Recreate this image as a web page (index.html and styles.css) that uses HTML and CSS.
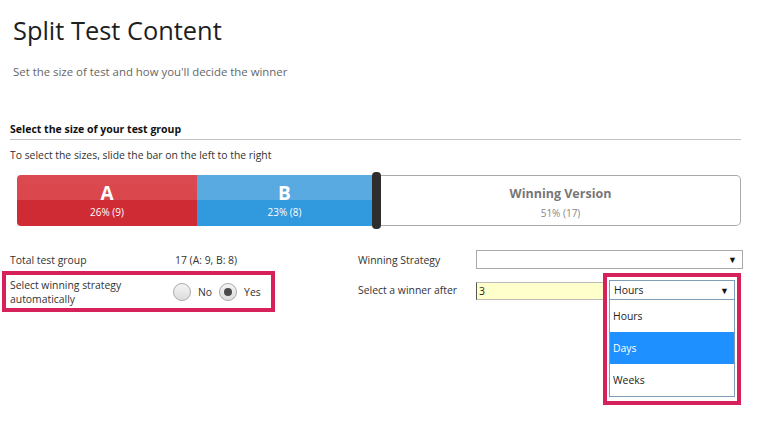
FILE: index.html
```html
<!DOCTYPE html>
<html lang="en">
<head>
    <meta charset="UTF-8">
    <meta name="viewport" content="width=device-width, initial-scale=1.0">
    <title>Split Test Content</title>
    <link rel="stylesheet" href="styles.css">
</head>
<body>
    <header class="intro">
        <h1>Split Test Content</h1>
        <p class="lead">Set the size of test and how you'll decide the winner</p>
    </header>

    <main class="group">
        <h2 class="section-title">Select the size of your test group</h2>
        <p class="hint">To select the sizes, slide the bar on the left to the right</p>

        <div class="splitter">
            <div class="seg seg-a" style="width: 180px;">
                <span class="seg-name">A</span>
                <span class="seg-share">26% (9)</span>
            </div>
            <div class="seg seg-b" style="width: 175px;">
                <span class="seg-name">B</span>
                <span class="seg-share">23% (8)</span>
            </div>
            <div class="handle"></div>
            <div class="seg seg-win">
                <span class="seg-name">Winning Version</span>
                <span class="seg-share">51% (17)</span>
            </div>
        </div>

        <div class="settings">
            <div class="col col-left">
                <div class="row">
                    <span class="label">Total test group</span>
                    <span class="value">17 (A: 9, B: 8)</span>
                </div>
                <div class="row highlight highlight-auto">
                    <span class="label">Select winning strategy<br>automatically</span>
                    <label class="radio"><span class="dot"></span>No</label>
                    <label class="radio"><span class="dot checked"></span>Yes</label>
                </div>
            </div>

            <div class="col col-right">
                <div class="row">
                    <span class="label label-wide">Winning Strategy</span>
                    <div class="select select-strategy"><span></span><span class="arrow">&#9660;</span></div>
                </div>
                <div class="row row-after">
                    <span class="label label-wide label-after">Select a winner after</span>
                    <div class="text-input">3</div>
                    <div class="highlight highlight-unit">
                        <div class="select select-unit"><span>Hours</span><span class="arrow">&#9660;</span></div>
                        <ul class="options">
                            <li>Hours</li>
                            <li class="active">Days</li>
                            <li>Weeks</li>
                        </ul>
                    </div>
                </div>
            </div>
        </div>
    </main>
</body>
</html>
```

FILE: styles.css
```css
body {
    font-family: "Open Sans", "Noto Sans", sans-serif;
    margin: 0;
    padding: 0;
    background-color: #fff;
    color: #333;
}

.intro {
    padding: 12px 13px 0;
}

.intro h1 {
    font-size: 25.4px;
    font-weight: 400;
    color: #1e1e1e;
    margin: 0;
    line-height: 36px;
}

.lead {
    font-size: 11.4px;
    color: #666;
    margin: 16px 0 0;
}

.group {
    padding: 0 16px 0 10px;
    margin-top: 43px;
}

.section-title {
    font-size: 10.5px;
    font-weight: 700;
    color: #111;
    margin: 0;
    padding-bottom: 3px;
    border-bottom: 1px solid #c3c3c3;
}

.hint {
    font-size: 10.4px;
    color: #333;
    margin: 8px 0 0;
}

.splitter {
    display: flex;
    align-items: center;
    height: 57px;
    margin: 10px 0 0 7px;
    width: 724px;
}

.seg {
    height: 51px;
    box-sizing: border-box;
    padding-top: 9px;
    display: flex;
    flex-direction: column;
    align-items: center;
    color: #fff;
}

.seg-name {
    font-size: 19px;
    font-weight: 700;
    line-height: 18px;
}

.seg-share {
    font-size: 10px;
    line-height: 14px;
    margin-top: 3px;
}

.seg-a {
    background: linear-gradient(#db4a50 0%, #d9464c 50%, #cf2b34 50%, #cf2b34 100%);
    border-radius: 4px 0 0 4px;
}

.seg-b {
    background: linear-gradient(#5aaae2 0%, #5aaae2 50%, #3199dd 50%, #3199dd 100%);
}

.handle {
    width: 9px;
    height: 57px;
    background-color: #2e2e2e;
    border-radius: 4px;
}

.seg-win {
    flex: 1;
    background-color: #fff;
    border: 1px solid #aaa;
    border-left: none;
    border-radius: 0 5px 5px 0;
}

.seg-win .seg-name {
    font-size: 12.5px;
    color: #777;
}

.seg-win .seg-share {
    color: #888;
}

.settings {
    display: flex;
    margin-top: 21px;
    font-size: 10.4px;
    color: #333;
}

.col-left {
    width: 348px;
    flex-shrink: 0;
}

.col-right {
    flex: 1;
}

.row {
    display: flex;
    align-items: center;
    min-height: 20px;
}

.label {
    width: 165px;
    flex-shrink: 0;
}

.label-wide {
    width: 118px;
}

.highlight {
    border: 4px solid #d6215b;
}

.highlight-auto {
    margin: 1px 0 0 -8px;
    width: 257px;
    padding: 2px 4px;
    box-sizing: content-box;
    height: 29px;
}

.highlight-auto .label {
    width: 163px;
    line-height: 14px;
}

.radio {
    display: flex;
    align-items: center;
    margin-right: 7px;
}

.dot {
    width: 16px;
    height: 16px;
    border-radius: 50%;
    border: 1px solid #aaa;
    background: linear-gradient(#f4f4f4, #dcdcdc);
    margin-right: 7px;
    display: flex;
    align-items: center;
    justify-content: center;
}

.dot.checked::after {
    content: "";
    width: 8px;
    height: 8px;
    border-radius: 50%;
    background-color: #4a4a4a;
}

.select {
    display: flex;
    justify-content: space-between;
    align-items: center;
    box-sizing: border-box;
    height: 19px;
    border: 1px solid #aaa;
    background-color: #fff;
    padding: 0 5px 0 4px;
    font-size: 10.4px;
    color: #222;
}

.select-strategy {
    width: 267px;
    flex-shrink: 0;
    margin-top: -1px;
}

.arrow {
    font-size: 9px;
    color: #111;
}

.row-after {
    align-items: flex-start;
    margin-top: 3px;
}

.label-after {
    margin-top: 10px;
}

.text-input {
    width: 128px;
    height: 18px;
    margin-top: 9px;
    flex-shrink: 0;
    box-sizing: border-box;
    background-color: #ffffcc;
    border: 1px solid #bbb;
    border-left-color: #555;
    padding: 2px 2px;
    line-height: 13px;
    color: #222;
}

.highlight-unit {
    margin-left: -1px;
    width: 126px;
    flex-shrink: 0;
    padding: 3px 2px 4px;
    box-sizing: content-box;
}

.select-unit {
    width: 126px;
    height: 20px;
    border-color: #7f9db9;
}

.options {
    list-style: none;
    margin: 0;
    padding: 0;
    width: 126px;
    box-sizing: border-box;
    border: 1px solid #7f9db9;
    border-top: none;
    font-size: 10.4px;
    color: #222;
}

.options li {
    height: 32px;
    line-height: 32px;
    padding-left: 3px;
}

.options li.active {
    background-color: #1e90ff;
    color: #fff;
}
```
